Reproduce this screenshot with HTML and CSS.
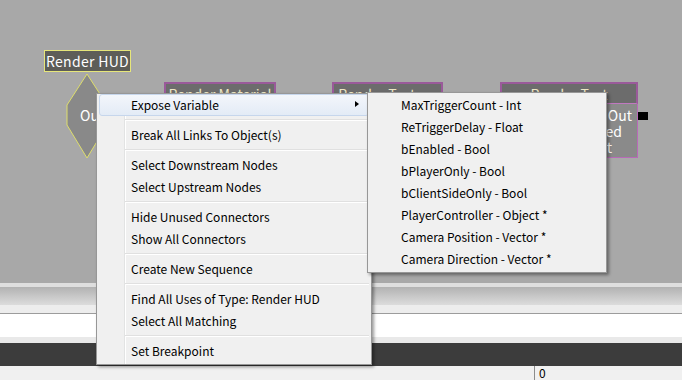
FILE: index.html
```html
<!DOCTYPE html>
<html>
<head>
    <title>Kismet - Context Menu</title>
    <link rel="stylesheet" href="styles.css">
</head>
<body>
    <div class="editor">
        <div class="canvas">
            <div class="hud-title">Render HUD</div>
            <svg class="hud-body" width="43" height="87" viewBox="0 0 43 87">
                <polygon points="21,1 1,32 1,52 21,85 41,52 41,32" fill="#898989" stroke="#dede6c" stroke-width="1"/>
            </svg>
            <span class="hud-out">Out</span>

            <div class="node node-material">
                <div class="node-title">Render Material</div>
                <div class="node-body"></div>
            </div>
            <div class="node node-texture">
                <div class="node-title">Render Texture</div>
                <div class="node-body"></div>
            </div>
            <div class="node node-text">
                <div class="node-title">Render Text</div>
                <div class="node-body">
                    <span class="pin pin-out">Out</span>
                    <span class="pin pin-mid">Finished</span>
                    <span class="pin pin-low">Text</span>
                </div>
                <span class="connector"></span>
            </div>
        </div>
        <div class="edge"></div>
        <div class="toolbar"></div>
        <div class="strip"></div>
        <div class="field"></div>
        <div class="strip-low"></div>
        <div class="dark"></div>
        <div class="status">
            <span class="status-cell">0</span>
        </div>

        <div class="menu main-menu">
            <div class="item active">Expose Variable<span class="arrow"></span></div>
            <div class="sep"></div>
            <div class="item">Break All Links To Object(s)</div>
            <div class="sep"></div>
            <div class="item">Select Downstream Nodes</div>
            <div class="item">Select Upstream Nodes</div>
            <div class="sep"></div>
            <div class="item">Hide Unused Connectors</div>
            <div class="item">Show All Connectors</div>
            <div class="sep"></div>
            <div class="item">Create New Sequence</div>
            <div class="sep"></div>
            <div class="item">Find All Uses of Type: Render HUD</div>
            <div class="item">Select All Matching</div>
            <div class="sep"></div>
            <div class="item">Set Breakpoint</div>
        </div>

        <div class="menu sub-menu">
            <div class="item">MaxTriggerCount - Int</div>
            <div class="item">ReTriggerDelay - Float</div>
            <div class="item">bEnabled - Bool</div>
            <div class="item">bPlayerOnly - Bool</div>
            <div class="item">bClientSideOnly - Bool</div>
            <div class="item">PlayerController - Object *</div>
            <div class="item">Camera Position - Vector *</div>
            <div class="item">Camera Direction - Vector *</div>
        </div>
    </div>
</body>
</html>
```

FILE: styles.css
```css
body {
    margin: 0;
    font-family: "Noto Sans CJK KR", "Noto Sans", sans-serif;
}

.editor {
    position: relative;
    width: 682px;
    height: 380px;
    overflow: hidden;
    display: flex;
    flex-direction: column;
    background: #f0f0f0;
}

/* graph canvas */
.canvas {
    position: relative;
    height: 283px;
    background: #a8a8a8;
    overflow: hidden;
}

.hud-title {
    position: absolute;
    left: 44px;
    top: 50px;
    width: 87px;
    height: 22px;
    box-sizing: border-box;
    border: 1px solid #e6e67a;
    background: #5d5d58;
    color: #fff;
    font-size: 14px;
    line-height: 20px;
    text-align: center;
    white-space: nowrap;
    letter-spacing: 0.3px;
}

.hud-body {
    position: absolute;
    left: 66px;
    top: 73px;
}

.hud-out {
    position: absolute;
    left: 80px;
    top: 106px;
    color: #fff;
    font-size: 14px;
    line-height: 18px;
}

.node {
    position: absolute;
    top: 82px;
}

.node-material { left: 164px; width: 112px; }
.node-texture { left: 332px; width: 111px; }
.node-text { left: 500px; width: 138px; }

.node-title {
    height: 22px;
    box-sizing: border-box;
    border: 2px solid #9a5a9a;
    border-bottom: 1px solid #c078c0;
    background: #6c6c6c;
    color: #ece6c4;
    font-size: 14px;
    line-height: 20px;
    text-align: center;
    white-space: nowrap;
}

.node-body {
    height: 54px;
    box-sizing: border-box;
    border: 1px solid #b86ab8;
    border-top: none;
    background: #8a8a8a;
    display: flex;
    flex-direction: column;
    align-items: flex-end;
    color: #fff;
    font-size: 14px;
    line-height: 16px;
}

.pin-out { margin: 3px 5px 0 0; }
.pin-mid { margin-right: 15px; }
.pin-low { margin-right: 25px; }

.connector {
    position: absolute;
    right: -10px;
    top: 30px;
    width: 10px;
    height: 8px;
    background: #000;
}

/* panels below the canvas */
.edge { height: 4px; background: #dedede; }
.toolbar { height: 18px; background: linear-gradient(#b2b2b2, #dcdcdc); }
.strip { height: 8px; background: #ededed; }
.field { height: 23px; background: #fff; border-top: 1px solid #9c9c9c; }
.strip-low { height: 6px; background: #e9e9e9; }
.dark { height: 23px; background: #3c3c3c; }

.status {
    flex: 1;
    display: flex;
    background: #f0f0f0;
}

.status-cell {
    margin-left: 534px;
    padding-left: 4px;
    border-left: 1px solid #8c8c8c;
    font-size: 12px;
    line-height: 14px;
    color: #000;
}

/* context menus */
.menu {
    position: absolute;
    box-sizing: border-box;
    border: 1px solid #979797;
    background: linear-gradient(to right, transparent 27px, #e2e3e3 27px, #e2e3e3 28px, #fff 28px, #fff 29px, transparent 29px), #f0f0f0;
    box-shadow: 2px 2px 3px rgba(0, 0, 0, 0.4);
    color: #000;
    font-size: 12px;
}

.main-menu {
    left: 96px;
    top: 93px;
    width: 276px;
    padding: 0 2px 2px 2px;
}

.sub-menu {
    left: 367px;
    top: 92px;
    width: 240px;
    padding: 1px 2px 2px 1px;
    background: #f0f0f0;
}

.item {
    position: relative;
    height: 22px;
    line-height: 22px;
    padding-left: 32px;
    white-space: nowrap;
}

.item.active {
    box-sizing: border-box;
    line-height: 20px;
    padding-left: 31px;
    border: 1px solid #c6d6ec;
    border-radius: 3px;
    background: linear-gradient(#f3f6fb, #e3ebf6);
}

.arrow {
    position: absolute;
    right: 9px;
    top: 6px;
    border-left: 4px solid #000;
    border-top: 3.5px solid transparent;
    border-bottom: 3.5px solid transparent;
}

.sep {
    height: 8px;
    margin-left: 26px;
    box-sizing: border-box;
    padding-top: 3px;
}

.sep::before {
    content: "";
    display: block;
    height: 1px;
    background: #e0e0e0;
    border-bottom: 1px solid #fff;
}
```
